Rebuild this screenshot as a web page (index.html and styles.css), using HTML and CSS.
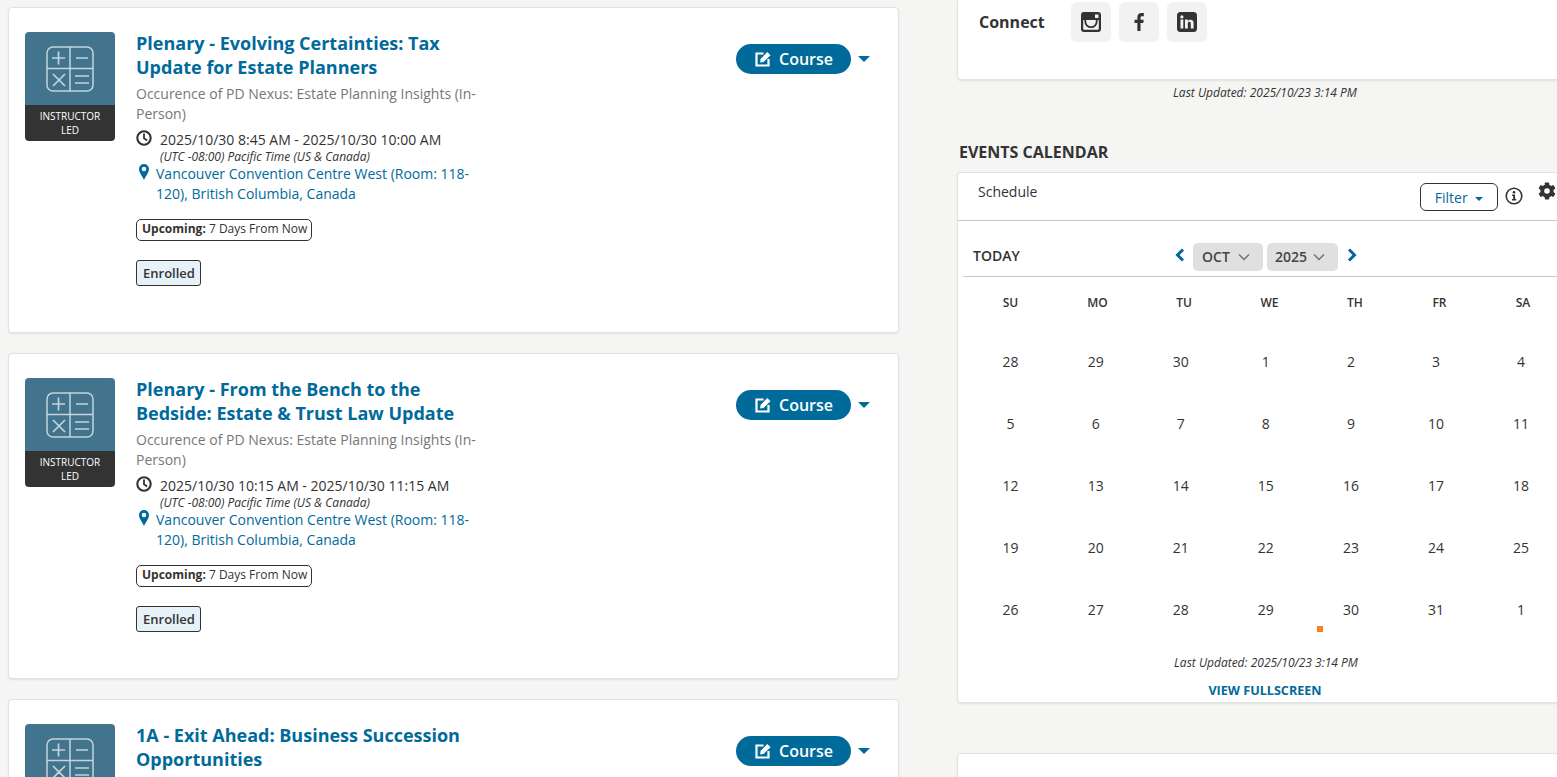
FILE: index.html
```html
<!DOCTYPE html>
<html lang="en">
<head>
<meta charset="utf-8">
<title>Courses and Events Calendar</title>
<link rel="stylesheet" href="styles.css">
</head>
<body>
<svg class="defs" width="0" height="0" aria-hidden="true">
  <symbol id="calc" viewBox="0 0 48 46">
    <g fill="none" stroke="#c3d4dc" stroke-width="1.500">
      <rect x="1" y="1" width="46" height="44" rx="6"/>
      <path d="M24 1V45M1 22.500H47"/>
      <path d="M6 12H19M12.500 5.500V18.500M30 12H42M7 28L19 40M19 28L7 40M29 30H43M29 37H43" stroke-width="1.700"/>
    </g>
  </symbol>
  <symbol id="clock" viewBox="0 0 16 16">
    <circle cx="8" cy="8" r="6.700" fill="none" stroke="#333" stroke-width="2.100"/>
    <path d="M8 3.600V8.300L11.200 10.400" fill="none" stroke="#333" stroke-width="1.800"/>
  </symbol>
  <symbol id="pin" viewBox="0 0 10 16">
    <path fill-rule="evenodd" fill="#006a9b" d="M5 0a5 5 0 0 1 5 5C10 8.500 6.800 12 5 16 3.200 12 0 8.500 0 5A5 5 0 0 1 5 0zm0 2.700a2.300 2.300 0 1 0 0 4.600 2.300 2.300 0 0 0 0-4.600z"/>
  </symbol>
  <symbol id="edit" viewBox="0 0 16 16">
    <path fill="none" stroke="#fff" stroke-width="2.200" d="M8.500 2.500H1.500V14.500H13.500V8"/>
    <path fill="#fff" d="M5.500 8L12.300 1 15.500 4.200 8.500 11 5.200 11.500z"/>
  </symbol>
</svg>
<div class="page">
  <main class="courses">
    <article class="card">
      <div class="thumb">
        <div class="thumb-art"><svg class="calc"><use href="#calc"/></svg></div>
        <div class="thumb-label">INSTRUCTOR LED</div>
      </div>
      <div class="info">
        <h2 class="title">Plenary - Evolving Certainties: Tax Update for Estate Planners</h2>
        <p class="subtitle">Occurence of PD Nexus: Estate Planning Insights (In-Person)</p>
        <div class="when"><svg class="clock"><use href="#clock"/></svg><span>2025/10/30 8:45 AM - 2025/10/30 10:00 AM</span></div>
        <div class="zone">(UTC -08:00) Pacific Time (US &amp; Canada)</div>
        <div class="where"><svg class="pin"><use href="#pin"/></svg><a>Vancouver Convention Centre West (Room: 118-120), British Columbia, Canada</a></div>
        <div class="upcoming"><b>Upcoming:</b> 7 Days From Now</div>
        <div class="enrolled">Enrolled</div>
      </div>
      <div class="action"><button class="course-btn"><svg class="edit"><use href="#edit"/></svg>Course</button><span class="caret"></span></div>
    </article>
    <article class="card">
      <div class="thumb">
        <div class="thumb-art"><svg class="calc"><use href="#calc"/></svg></div>
        <div class="thumb-label">INSTRUCTOR LED</div>
      </div>
      <div class="info">
        <h2 class="title">Plenary - From the Bench to the Bedside: Estate &amp; Trust Law Update</h2>
        <p class="subtitle">Occurence of PD Nexus: Estate Planning Insights (In-Person)</p>
        <div class="when"><svg class="clock"><use href="#clock"/></svg><span>2025/10/30 10:15 AM - 2025/10/30 11:15 AM</span></div>
        <div class="zone">(UTC -08:00) Pacific Time (US &amp; Canada)</div>
        <div class="where"><svg class="pin"><use href="#pin"/></svg><a>Vancouver Convention Centre West (Room: 118-120), British Columbia, Canada</a></div>
        <div class="upcoming"><b>Upcoming:</b> 7 Days From Now</div>
        <div class="enrolled">Enrolled</div>
      </div>
      <div class="action"><button class="course-btn"><svg class="edit"><use href="#edit"/></svg>Course</button><span class="caret"></span></div>
    </article>
    <article class="card">
      <div class="thumb">
        <div class="thumb-art"><svg class="calc"><use href="#calc"/></svg></div>
        <div class="thumb-label">INSTRUCTOR LED</div>
      </div>
      <div class="info">
        <h2 class="title">1A - Exit Ahead: Business Succession Opportunities</h2>
      </div>
      <div class="action"><button class="course-btn"><svg class="edit"><use href="#edit"/></svg>Course</button><span class="caret"></span></div>
    </article>
  </main>
  <aside class="side">
    <section class="panel connect">
      <span class="connect-label">Connect</span>
      <a class="social">
        <svg viewBox="0 0 20 20" width="20" height="20"><path fill-rule="evenodd" fill="#333" d="M3 0h14a3 3 0 0 1 3 3v14a3 3 0 0 1-3 3H3a3 3 0 0 1-3-3V3a3 3 0 0 1 3-3zM14 2.500v3.500h3.500V2.500zM2.200 8v8.800A1 1 0 0 0 3.200 17.800h13.600a1 1 0 0 0 1-1V8z"/><path d="M4.300 8V9.500a5.700 5.700 0 0 0 11.400 0V8" fill="none" stroke="#333" stroke-width="1.800"/></svg>
      </a>
      <a class="social">
        <svg viewBox="0 0 11 20" width="10" height="20"><path fill="#333" d="M7.200 20V11h3l.5-3.500H7.200V5.300c0-1 .3-1.700 1.800-1.700h1.800V.4C10.500.3 9.400.200 8.200.200 5.500.200 3.700 1.800 3.700 4.800v2.700H.6V11h3.100v9z"/></svg>
      </a>
      <a class="social">
        <svg viewBox="0 0 20 20" width="20" height="20"><path fill-rule="evenodd" fill="#333" d="M3.500 0h13A3.500 3.500 0 0 1 20 3.500v13a3.500 3.500 0 0 1-3.500 3.500h-13A3.500 3.500 0 0 1 0 16.500v-13A3.500 3.500 0 0 1 3.500 0zM3.500 7.500v9h2.800v-9zM4.900 3.300a1.600 1.600 0 1 0 0 3.200 1.600 1.600 0 0 0 0-3.200zM8 7.500v9h2.800v-4.800c0-2.400 3-2.500 3 0v4.800h2.800v-5.500c0-4-4.300-3.900-5.800-1.900V7.500z"/></svg>
      </a>
    </section>
    <p class="updated updated-top">Last Updated: 2025/10/23 3:14 PM</p>
    <h3 class="events-heading">EVENTS CALENDAR</h3>
    <section class="panel calendar">
      <header class="cal-top">
        <span class="schedule">Schedule</span>
        <button class="filter">Filter <span class="mini-caret"></span></button>
        <svg class="info-icon" viewBox="0 0 18 18" width="18" height="18"><circle cx="9" cy="9" r="7.800" fill="none" stroke="#333" stroke-width="1.600"/><circle cx="9" cy="5.300" r="1.300" fill="#333"/><path fill="#333" d="M7.100 7.500H10.100V12H11.200V13.500H7V12H8.200V9H7.100z"/></svg>
        <svg class="gear" viewBox="0 0 18 18" width="18" height="18">
          <g fill="#333">
            <circle cx="9" cy="9" r="6.600"/>
            <rect x="6.800" y=".4" width="4.400" height="17.200" rx=".8"/>
            <rect x="6.800" y=".4" width="4.400" height="17.200" rx=".8" transform="rotate(60 9 9)"/>
            <rect x="6.800" y=".4" width="4.400" height="17.200" rx=".8" transform="rotate(120 9 9)"/>
          </g>
          <circle cx="9" cy="9" r="2.800" fill="#fff"/>
        </svg>
      </header>
      <div class="cal-nav">
        <span class="today">TODAY</span>
        <div class="cal-pick">
          <svg class="chev" viewBox="0 0 10 14" width="10" height="14"><path d="M8 1.500L2.500 7 8 12.500" fill="none" stroke="#006a9b" stroke-width="3"/></svg>
          <span class="pick pick-month">OCT<svg viewBox="0 0 12 8" width="12" height="8"><path d="M1 1.500L6 6.500 11 1.500" fill="none" stroke="#6c7480" stroke-width="1.500"/></svg></span>
          <span class="pick pick-year">2025<svg viewBox="0 0 12 8" width="12" height="8"><path d="M1 1.500L6 6.500 11 1.500" fill="none" stroke="#6c7480" stroke-width="1.500"/></svg></span>
          <svg class="chev chev-next" viewBox="0 0 10 14" width="10" height="14"><path d="M2 1.500L7.500 7 2 12.500" fill="none" stroke="#006a9b" stroke-width="3"/></svg>
        </div>
      </div>
      <div class="weekdays"><span>SU</span><span>MO</span><span>TU</span><span>WE</span><span>TH</span><span>FR</span><span>SA</span></div>
      <div class="days">
        <span>28</span><span>29</span><span>30</span><span>1</span><span>2</span><span>3</span><span>4</span>
        <span>5</span><span>6</span><span>7</span><span>8</span><span>9</span><span>10</span><span>11</span>
        <span>12</span><span>13</span><span>14</span><span>15</span><span>16</span><span>17</span><span>18</span>
        <span>19</span><span>20</span><span>21</span><span>22</span><span>23</span><span>24</span><span>25</span>
        <span>26</span><span>27</span><span>28</span><span>29</span><span class="has-event">30</span><span>31</span><span>1</span>
      </div>
      <p class="updated updated-cal">Last Updated: 2025/10/23 3:14 PM</p>
      <a class="fullscreen">VIEW FULLSCREEN</a>
    </section>
    <section class="panel next-panel"></section>
  </aside>
</div>
</body>
</html>
```
FILE: styles.css
```css
* { box-sizing: border-box; }
html, body { height: 777px; overflow: hidden; }
body { margin: 0; background: #f5f5f3; color: #333; font-family: "Open Sans", "Noto Sans", sans-serif; font-size: 14px; }
.defs { position: absolute; }
.page { display: flex; align-items: flex-start; height: 777px; overflow: hidden; }

/* Course column */
.courses { flex: none; width: 891px; margin-left: 8px; padding-top: 7px; display: flex; flex-direction: column; gap: 20px; }
.card { display: flex; height: 326px; padding: 24px 16px; background: #fff; border: 1px solid #e2e2e2; border-radius: 4px; box-shadow: 0 1px 2px rgba(0,0,0,.08); }
.thumb { flex: none; width: 90px; height: 109px; border-radius: 4px; overflow: hidden; margin-right: 21px; }
.thumb-art { height: 73px; background: #43748d; display: flex; justify-content: center; align-items: center; }
.calc { width: 48px; height: 46px; }
.thumb-label { height: 36px; padding: 4px 14px 0; background: #333; color: #fff; font-size: 10px; line-height: 14px; text-align: center; }
.info { flex: none; width: 342px; }
.title { margin: -1px 0 0; color: #006a9b; font-size: 18px; line-height: 24px; font-weight: 700; }
.subtitle { margin: 5px 0 0; color: #777; line-height: 20px; }
.when { display: flex; align-items: center; gap: 8px; height: 20px; margin-top: 5px; }
.clock { width: 16px; height: 16px; flex: none; margin-top: -3px; }
.zone { margin: 1px 0 0 24px; font-size: 12px; line-height: 14px; font-style: italic; }
.where { display: flex; gap: 7px; color: #006a9b; line-height: 20px; }
.pin { flex: none; width: 10px; height: 16px; margin: 0 0 0 3px; }
.upcoming { width: fit-content; height: 22px; margin-top: 15px; padding: 0 4px 0 5px; border: 1px solid #333; border-radius: 5px; font-size: 12px; line-height: 18px; }
.upcoming b { font-weight: 700; }
.enrolled { width: fit-content; height: 26px; margin-top: 19px; padding: 0 5px 0 6px; background: #e6f1f8; border: 1px solid #333; border-radius: 3px; font-size: 13px; line-height: 24px; font-weight: 600; }
.action { display: flex; align-items: center; height: 30px; margin: 12px 0 0 258px; }
.course-btn { display: flex; align-items: center; justify-content: center; gap: 8px; width: 115px; height: 30px; padding: 0 0 0 1px; background: #006a9b; color: #fff; border: 0; border-radius: 15px; font: 600 16px "Open Sans", sans-serif; }
.edit { width: 16px; height: 16px; margin-top: -1px; }
.caret { margin-left: 7px; border: 6px solid transparent; border-top-color: #006a9b; border-bottom-width: 0; }

/* Side column */
.side { flex: none; width: 640px; margin-left: 58px; }
.panel { background: #fff; border: 1px solid #e2e2e2; border-radius: 4px; box-shadow: 0 1px 2px rgba(0,0,0,.08); }
.connect { display: flex; align-items: flex-start; gap: 8px; height: 80px; padding: 2px 0 0 21px; border-top: 0; border-radius: 0 0 4px 4px; }
.connect-label { width: 84px; font-size: 16px; line-height: 40px; font-weight: 700; }
.social { display: flex; align-items: center; justify-content: center; width: 40px; height: 40px; background: #f2f2f2; border-radius: 6px; }
.updated { margin: 0; font-size: 12px; font-style: italic; text-align: center; width: 616px; }
.updated-top { margin-top: 5px; line-height: 15px; }
.events-heading { margin: 41px 0 0 2px; font-size: 16px; line-height: 22px; font-weight: 700; }
.calendar { height: 531px; margin-top: 9px; }
.cal-top { display: flex; align-items: flex-start; height: 48px; border-bottom: 1px solid #c8c8c8; padding-left: 20px; }
.schedule { width: 442px; margin-top: 9px; line-height: 20px; }
.filter { width: 78px; height: 28px; margin-top: 10px; padding: 0; background: #fff; border: 1px solid #333; border-radius: 6px; color: #006a9b; font: 14px "Open Sans", sans-serif; }
.mini-caret { display: inline-block; margin: 0 0 2px 4px; border: 4px solid transparent; border-top-color: #006a9b; border-bottom-width: 0; }
.info-icon { margin: 14px 0 0 7px; }
.gear { flex: none; margin: 9px 0 0 15px; }
.cal-nav { display: flex; align-items: center; height: 56px; margin-left: 5px; padding-top: 16px; border-bottom: 1px solid #c8c8c8; }
.today { width: 212px; padding-left: 10px; margin-top: -2px; font-size: 14px; font-weight: 600; }
.cal-pick { display: flex; align-items: center; gap: 4px; }
.chev { margin-top: -3px; }
.chev-next { margin-left: 5px; }
.pick { display: flex; align-items: center; justify-content: space-between; height: 28px; background: #e0e0e0; border-radius: 5px; font-size: 14px; font-weight: 600; color: #444; }
.pick-month { width: 70px; margin-left: 4px; padding: 0 13px 0 9px; }
.pick-year { width: 71px; padding: 0 13px 0 8px; }
.pick svg { flex: none; }
.weekdays { display: grid; grid-template-columns: 87px 87px 86px 85px 86px 83px 84px; width: 602px; margin: 17px 0 0 9px; text-align: center; font-size: 12px; line-height: 18px; font-weight: 600; }
.days { display: grid; grid-template-columns: repeat(7, 85.100px); margin: 40px 0 0 10px; text-align: center; line-height: 20px; }
.days span { display: block; height: 62px; position: relative; }
.has-event::after { content: ""; position: absolute; left: 9px; top: 26px; width: 6px; height: 6px; background: #f58220; }
.updated-cal { margin-top: -7px; width: 616px; line-height: 15px; }
.fullscreen { display: block; width: 614px; margin-top: 13px; text-align: center; color: #006a9b; font-size: 12.600px; line-height: 16px; font-weight: 700; }
.next-panel { height: 60px; margin-top: 50px; }
```
